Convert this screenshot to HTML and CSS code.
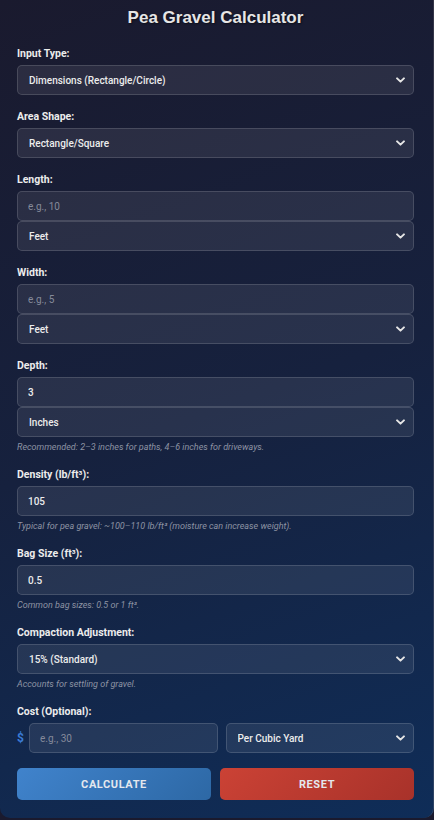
FILE: index.html
```html
<!DOCTYPE html>
<html lang="en">
<head>
  <meta charset="utf-8" />
  <title>Pea Gravel Calculator</title>
  <meta name="viewport" content="width=device-width, initial-scale=1" />
  <link rel="stylesheet" href="styles.css">
</head>
<body>
  <div class="calculator">
    <h1 class="title">Pea Gravel Calculator</h1>

    <div class="group">
      <label for="inputType">Input Type:</label>
      <div class="select-wrap">
        <select id="inputType" class="field">
          <option>Dimensions (Rectangle/Circle)</option>
          <option>Area</option>
        </select>
        <svg class="chevron" viewBox="0 0 10 6"><path d="M1.2 1.2 5 4.8 8.8 1.2" /></svg>
      </div>
    </div>

    <div class="group">
      <label for="shape">Area Shape:</label>
      <div class="select-wrap">
        <select id="shape" class="field">
          <option>Rectangle/Square</option>
          <option>Circle</option>
        </select>
        <svg class="chevron" viewBox="0 0 10 6"><path d="M1.2 1.2 5 4.8 8.8 1.2" /></svg>
      </div>
    </div>

    <div class="group">
      <label for="length">Length:</label>
      <input id="length" class="field" type="number" placeholder="e.g., 10">
      <div class="select-wrap">
        <select class="field">
          <option>Feet</option>
          <option>Yards</option>
          <option>Meters</option>
        </select>
        <svg class="chevron" viewBox="0 0 10 6"><path d="M1.2 1.2 5 4.8 8.8 1.2" /></svg>
      </div>
    </div>

    <div class="group">
      <label for="width">Width:</label>
      <input id="width" class="field" type="number" placeholder="e.g., 5">
      <div class="select-wrap">
        <select class="field">
          <option>Feet</option>
          <option>Yards</option>
          <option>Meters</option>
        </select>
        <svg class="chevron" viewBox="0 0 10 6"><path d="M1.2 1.2 5 4.8 8.8 1.2" /></svg>
      </div>
    </div>

    <div class="group">
      <label for="depth">Depth:</label>
      <input id="depth" class="field" type="number" value="3">
      <div class="select-wrap">
        <select class="field">
          <option>Inches</option>
          <option>Feet</option>
          <option>Centimeters</option>
        </select>
        <svg class="chevron" viewBox="0 0 10 6"><path d="M1.2 1.2 5 4.8 8.8 1.2" /></svg>
      </div>
      <p class="help">Recommended: 2–3 inches for paths, 4–6 inches for driveways.</p>
    </div>

    <div class="group">
      <label for="density">Density (lb/ft³):</label>
      <input id="density" class="field" type="number" value="105">
      <p class="help">Typical for pea gravel: ~100–110 lb/ft³ (moisture can increase weight).</p>
    </div>

    <div class="group">
      <label for="bagSize">Bag Size (ft³):</label>
      <input id="bagSize" class="field" type="number" value="0.5">
      <p class="help">Common bag sizes: 0.5 or 1 ft³.</p>
    </div>

    <div class="group">
      <label for="compaction">Compaction Adjustment:</label>
      <div class="select-wrap">
        <select id="compaction" class="field">
          <option>15% (Standard)</option>
          <option>10% (Light)</option>
          <option>20% (Heavy)</option>
        </select>
        <svg class="chevron" viewBox="0 0 10 6"><path d="M1.2 1.2 5 4.8 8.8 1.2" /></svg>
      </div>
      <p class="help">Accounts for settling of gravel.</p>
    </div>

    <div class="group">
      <label for="cost">Cost (Optional):</label>
      <div class="cost-row">
        <span class="currency">$</span>
        <input id="cost" class="field" type="number" placeholder="e.g., 30">
        <div class="select-wrap">
          <select class="field">
            <option>Per Cubic Yard</option>
            <option>Per Ton</option>
            <option>Per Bag</option>
          </select>
          <svg class="chevron" viewBox="0 0 10 6"><path d="M1.2 1.2 5 4.8 8.8 1.2" /></svg>
        </div>
      </div>
    </div>

    <div class="actions">
      <button class="btn btn-calc">Calculate</button>
      <button class="btn btn-reset">Reset</button>
    </div>
  </div>
</body>
</html>
```

FILE: styles.css
```css
/* ========== GLOBAL ========== */
* {
  box-sizing: border-box;
}
body {
  margin: 0;
  background: #1a1a2e;
  font-family: Roboto, "Liberation Sans", sans-serif;
  color: #e8e8e8;
}

/* ========== CARD ========== */
.calculator {
  min-height: 818px;
  padding: 7px 19px 18px 17px;
  background: linear-gradient(160deg, #1a1a2e 0%, #16213e 50%, #0f2d58 100%);
  border-right: 1px solid rgba(255, 255, 255, 0.12);
  border-radius: 0 0 10px 10px;
}
.title {
  margin: 0 0 18px 0;
  font-family: "Liberation Sans", Arial, sans-serif;
  font-size: 17px;
  line-height: 22px;
  font-weight: bold;
  text-align: center;
  color: #e6e6e6;
  text-shadow: 1px 1px 2px rgba(0, 0, 0, 0.5);
}

/* ========== FORM ========== */
.group {
  margin-bottom: 15px;
}
.group label {
  display: block;
  margin-bottom: 5px;
  font-size: 10.5px;
  line-height: 13px;
  font-weight: bold;
  color: #ececec;
}
.field {
  display: block;
  width: 100%;
  height: 30px;
  padding: 0 10px;
  border: 1px solid rgba(255, 255, 255, 0.14);
  border-radius: 5px;
  background: rgba(255, 255, 255, 0.08);
  color: #ececec;
  font-family: Roboto, "Liberation Sans", sans-serif;
  font-size: 10px;
  font-weight: 500;
  outline: none;
  -moz-appearance: textfield;
}
.field::placeholder {
  color: #858a9a;
  font-weight: 400;
}
.field::-webkit-inner-spin-button,
.field::-webkit-outer-spin-button {
  -webkit-appearance: none;
  margin: 0;
}
select.field {
  -webkit-appearance: none;
  appearance: none;
  padding-left: 11px;
  cursor: pointer;
}
select.field option {
  background: #16213e;
}
.select-wrap {
  position: relative;
}
.chevron {
  position: absolute;
  right: 9px;
  top: 50%;
  width: 9px;
  height: 6px;
  margin-top: -3px;
  pointer-events: none;
}
.chevron path {
  fill: none;
  stroke: #e6e6e6;
  stroke-width: 2.2;
  stroke-linecap: round;
  stroke-linejoin: round;
}
.help {
  margin: 5px 0 0 0;
  font-size: 9px;
  line-height: 11px;
  font-style: italic;
  color: #8d93a3;
}

/* ========== COST ========== */
.cost-row {
  display: grid;
  grid-template-columns: 4px 1fr 1fr;
  align-items: center;
  column-gap: 8px;
}
.cost-row .currency {
  font-size: 12px;
  font-weight: bold;
  color: #3a7bd5;
}
.cost-row .field {
  min-width: 0;
}

/* ========== BUTTONS ========== */
.actions {
  display: grid;
  grid-template-columns: 1fr 1fr;
  gap: 9px;
}
.btn {
  height: 32px;
  border: none;
  border-radius: 5px;
  color: #e4e8ee;
  font-family: Roboto, "Liberation Sans", sans-serif;
  font-size: 11px;
  font-weight: bold;
  letter-spacing: 0.6px;
  text-transform: uppercase;
  cursor: pointer;
}
.btn-calc {
  background: linear-gradient(135deg, #4083cc, #2d68a5);
}
.btn-reset {
  background: linear-gradient(135deg, #cb4235, #a8322a);
}
```
